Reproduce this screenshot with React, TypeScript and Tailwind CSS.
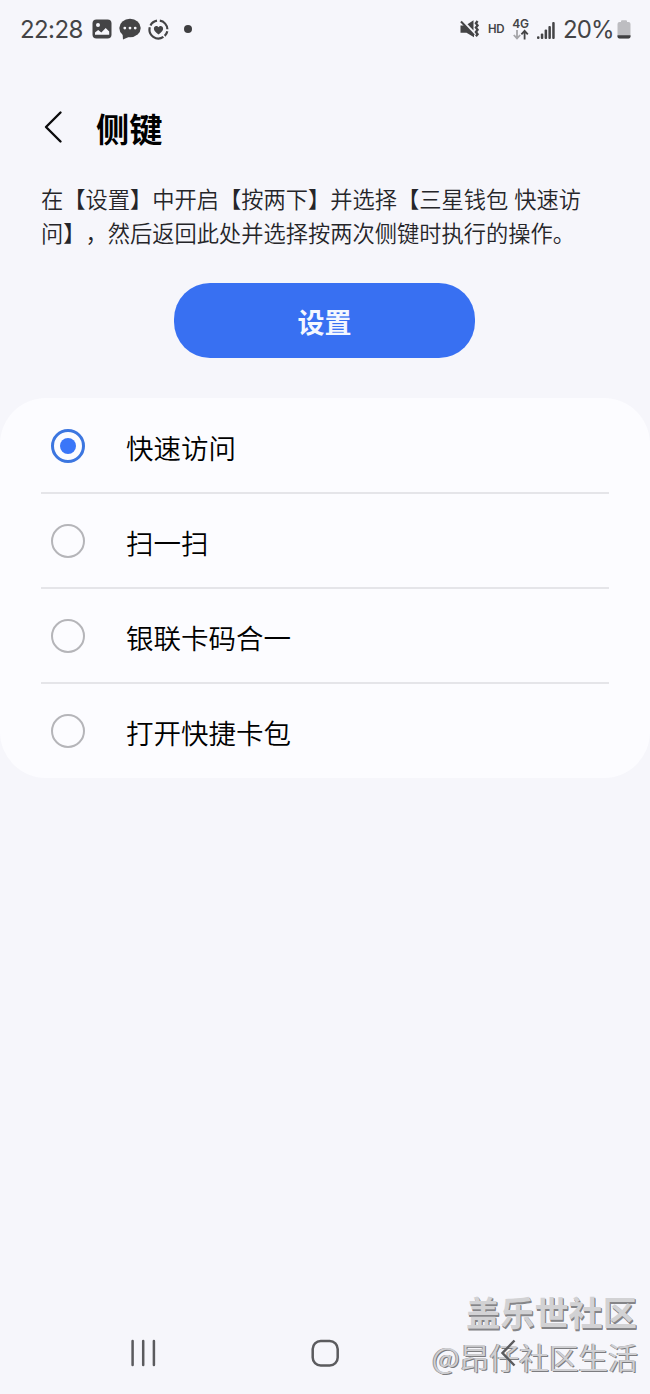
import { useState } from "react";

const OPTIONS = [
  { id: "quick", label: "快速访问" },
  { id: "scan", label: "扫一扫" },
  { id: "unionpay", label: "银联卡码合一" },
  { id: "wallet", label: "打开快捷卡包" },
] as const;

function StatusBar() {
  return (
    <header className="flex h-[58px] shrink-0 items-center justify-between pl-5 pr-[19px] font-['Inter','Liberation_Sans',sans-serif] text-[#444446]">
      <div className="flex items-center">
        <span className="w-[72px] whitespace-nowrap pt-px text-[24px] font-[380] leading-[30px] tracking-[-0.6px]">
          22:28
        </span>
        {/* gallery */}
        <svg width="20" height="20" viewBox="0 0 20 20">
          <rect x="0.5" y="0.5" width="19" height="19" rx="4" fill="currentColor" />
          <circle cx="6" cy="5.9" r="2" fill="#f6f6fb" />
          <path d="M3 15.8v-2.2l3.2-2.5 3.1 2.4 4.4-4.600 3.500 3.700v3.200z" fill="#f6f6fb" />
        </svg>
        {/* messages */}
        <svg className="ml-[7px]" width="22" height="22" viewBox="0 0 22 22">
          <ellipse cx="11" cy="10" rx="10.7" ry="9.2" fill="currentColor" />
          <path d="M3.5 14.5 4 21.5 12 18z" fill="currentColor" />
          <circle cx="5.8" cy="10.1" r="1.4" fill="#f6f6fb" />
          <circle cx="11" cy="10.1" r="1.4" fill="#f6f6fb" />
          <circle cx="16.2" cy="10.1" r="1.4" fill="#f6f6fb" />
        </svg>
        {/* heart ring */}
        <svg className="ml-[7px]" width="21" height="21" viewBox="0 0 21 21" fill="none">
          <path
            d="M9 1.700a8.900 8.900 0 0 0-6.500 4.800M1.800 8.300a8.900 8.900 0 0 0 13.600 9.600M16.700 16.900a8.900 8.900 0 0 0 2.600-4.700M19.400 10.300A8.900 8.900 0 0 0 11.800 1.700"
            stroke="currentColor"
            strokeWidth="2.2"
          />
          <path
            d="M10.5 15.500C7.100 13.100 5.900 11.400 5.900 9.500c0-2.900 3.300-3.400 4.600-1.300 1.300-2.100 4.600-1.600 4.600 1.300 0 1.900-1.200 3.600-4.600 6z"
            fill="currentColor"
          />
        </svg>
        <span className="ml-[15px] size-[8px] rounded-full bg-[#3f3f41]" />
      </div>

      <div className="flex items-center">
        {/* muted, vibrating */}
        <svg width="20" height="20" viewBox="0 0 20 20" fill="currentColor">
          <path d="M.5 6.500H5l9 9.500v2.200L6.500 13.800H.5z" />
          <path d="m7.500 5.200 6-4v10.200z" />
          <path d="M1 2.500 14 16.200" stroke="currentColor" strokeWidth="2" />
          <path
            d="m17.600 2-1.700 2.200 1.700 2.200-1.700 2.200 1.700 2.200-1.700 2.200 1.700 2.200-1.700 2"
            fill="none"
            stroke="currentColor"
            strokeWidth="2.300"
          />
        </svg>
        <span className="ml-[8px] w-[18px] pt-px text-[11.5px] font-semibold leading-none tracking-[-0.3px]">
          HD
        </span>
        <div className="ml-[7px] flex w-[15px] flex-col items-center">
          <span className="text-[12px] font-semibold leading-[11px] tracking-[-0.3px]">4G</span>
          <svg width="16" height="11" viewBox="0 0 16 11" fill="none" strokeWidth="1.800">
            <path d="M4 1v8.500M0.800 6l3.200 3.400 3.200-3.400" stroke="#a5a5a9" />
            <path d="M11.600 10.500V2M8.400 5.300l3.200-3.400 3.200 3.400" stroke="currentColor" />
          </svg>
        </div>
        <svg className="ml-[9px] mr-px mt-[3px]" width="18" height="17" viewBox="0 0 18 17" fill="currentColor">
          <rect x="0" y="14.200" width="2.500" height="2.800" rx="1" />
          <rect x="3.800" y="11.500" width="2.500" height="5.500" rx="1" />
          <rect x="7.600" y="7.500" width="2.500" height="9.500" rx="1" />
          <rect x="11.400" y="4" width="2.500" height="13" rx="1" />
          <rect x="15.200" y="0" width="2.500" height="17" rx="1" />
        </svg>
        <span className="ml-[7px] w-[54px] whitespace-nowrap pt-px text-[24px] font-[380] leading-[30px] tracking-[-0.9px]">
          20%
        </span>
        <svg className="w-[14px]" height="19" viewBox="0 0 14 19">
          <path
            d="M4 2V1.200Q4 .2 5 .2h4q1 0 1 1V2h1.500Q13.500 2 13.500 4v12.500q0 2-2 2h-9q-2 0-2-2V4Q.5 2 2.500 2z"
            fill="#bdbdc1"
          />
          <path d="M.5 15.300h13v1.200q0 2-2 2h-9q-2 0-2-2z" fill="#3f3f41" />
        </svg>
      </div>
    </header>
  );
}

function Radio({ checked }: { checked: boolean }) {
  return (
    <span
      className={`flex size-[34px] items-center justify-center rounded-full ${
        checked ? "border-[3px] border-[#3c76e0]" : "border-2 border-[#b5b5b9]"
      }`}
    >
      {checked && <span className="size-4 rounded-full bg-[#3a76f8]" />}
    </span>
  );
}

function NavBar() {
  return (
    <nav className="relative z-10 mt-auto flex h-[82px] shrink-0 justify-center text-[#5b5b5e]">
      <svg width="390" height="82" viewBox="0 0 390 82" fill="none" stroke="currentColor" strokeWidth="2.500">
        <path d="M2.600 29v24M13.200 29v24M23.900 29v24" strokeLinecap="round" />
        <rect x="182.700" y="29" width="25" height="24.500" rx="8" />
        <path d="m384.500 28.500-12 12.500 12 12.500" />
      </svg>
    </nav>
  );
}

function Watermark() {
  return (
    <div className="pointer-events-none absolute bottom-[15px] right-[12px] flex flex-col items-end whitespace-nowrap">
      <span className="mr-px text-[34.200px] font-bold leading-[45px] text-[#d2d2d4] [text-shadow:1px_1px_0_#858588,1px_2px_0_#858588]">
        盖乐世社区
      </span>
      <span className="text-[29.700px] font-[350] leading-[45px] text-[#cfcfd2] [text-shadow:-1px_0_0_#98989b,1px_1px_0_#7c7c7f]">
        @昂仔社区生活
      </span>
    </div>
  );
}

export default function App() {
  const [selected, setSelected] = useState<string>("quick");

  return (
    <div className="relative flex h-[1394px] w-[650px] flex-col overflow-hidden bg-[#f6f6fb] font-['Noto_Sans_CJK_SC',sans-serif]">
      <StatusBar />

      <div className="mt-[44px] flex h-[50px] shrink-0 items-center">
        <button className="ml-[43px]" aria-label="返回">
          <svg width="22" height="34" viewBox="0 0 22 34" fill="none" stroke="#0b0b0c" strokeWidth="2.400">
            <path d="M17.500 2.500 3 17l14.500 14.500" strokeLinecap="round" strokeLinejoin="round" />
          </svg>
        </button>
        <h1 className="ml-[31px] pt-[2px] text-[33.300px] font-bold leading-[50px] text-black">侧键</h1>
      </div>

      <p className="mt-[29px] h-[70px] shrink-0 whitespace-nowrap pl-[41px] text-[22.250px] font-[350] leading-[34.300px] text-[#252529] [text-spacing-trim:space-all] [word-spacing:1px]">
        在【设置】中开启【按两下】并选择【三星钱包 快速访
        <br />
        问】，然后返回此处并选择按两次侧键时执行的操作。
      </p>

      <button className="ml-[174px] mt-8 h-[74.600px] w-[301px] shrink-0 rounded-[36px] bg-[#3870f2] pt-[4px] text-[27px] font-bold text-[#f3f7ff]">
        设置
      </button>

      <main className="mt-[40.400px] h-[380px] shrink-0 rounded-[46px] bg-[#fcfcff] px-[41px] pt-[0.9px]">
        {OPTIONS.map(({ id, label }, i) => (
          <label
            key={id}
            className={`flex h-[95.100px] items-center border-b-2 pl-[10px] ${
              i < OPTIONS.length - 1 ? "border-[#e5e5e9]" : "border-transparent"
            }`}
            onClick={() => setSelected(id)}
          >
            <span className="flex w-[34px] pt-px">
              <Radio checked={selected === id} />
            </span>
            <span className="ml-[41px] pt-[3px] text-[27.500px] font-[350] leading-10 text-black">{label}</span>
          </label>
        ))}
      </main>

      <NavBar />
      <Watermark />
    </div>
  );
}
